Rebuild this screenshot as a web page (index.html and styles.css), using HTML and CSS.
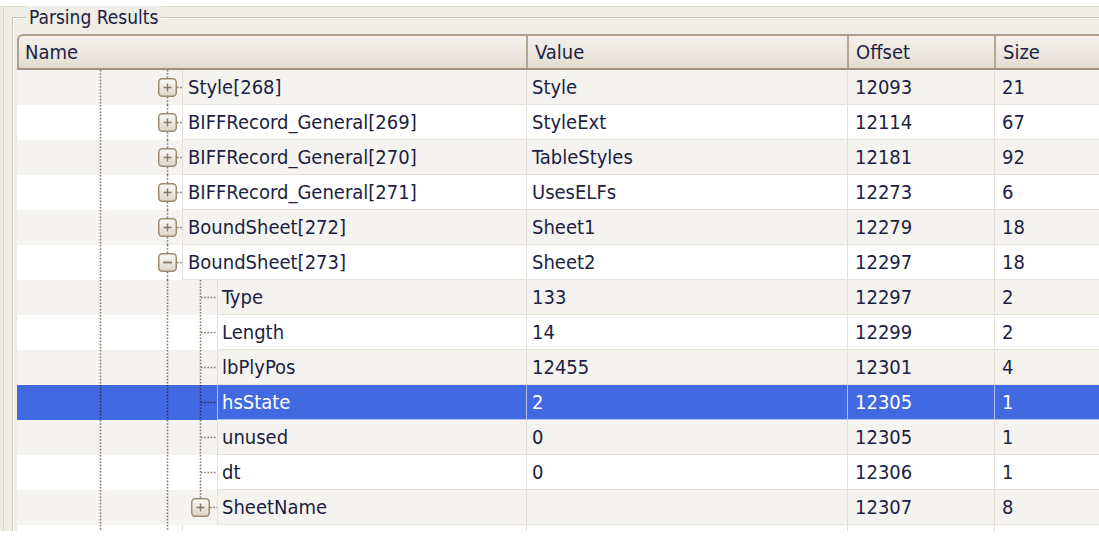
FILE: index.html
```html
<!DOCTYPE html>
<html>
<head>
<meta charset="utf-8">
<link rel="stylesheet" href="styles.css">
</head>
<body>
<svg class="defs" width="0" height="0" aria-hidden="true">
  <defs>
    <linearGradient id="bx" x1="0" y1="0" x2="0" y2="1">
      <stop offset="0" stop-color="#fbfaf7"/>
      <stop offset="1" stop-color="#ded6c7"/>
    </linearGradient>
    <g id="plusbox">
      <rect x="0.75" y="0.75" width="17.5" height="17.5" rx="3.5" fill="url(#bx)" stroke="#9d8c74" stroke-width="1.5" stroke-dasharray="none"/>
      <path d="M5.5 9.5h8M9.5 5.5v8" stroke="#85765f" stroke-width="1.4" stroke-dasharray="none" fill="none"/>
    </g>
    <g id="minusbox">
      <rect x="0.75" y="0.75" width="17.5" height="17.5" rx="3.5" fill="url(#bx)" stroke="#9d8c74" stroke-width="1.5" stroke-dasharray="none"/>
      <path d="M5 9.5h9" stroke="#85765f" stroke-width="1.8" stroke-dasharray="none" fill="none"/>
    </g>
    <g id="r1p" class="dots">
      <path d="M83.5 0v35M150.5 0v8M150.5 27v8M160 17.5h5"/>
      <use href="#plusbox" x="141" y="8"/>
    </g>
    <g id="r1m" class="dots">
      <path d="M83.5 0v35M150.5 0v8M150.5 27v8M160 17.5h5"/>
      <use href="#minusbox" x="141" y="8"/>
    </g>
    <g id="r2" class="dots">
      <path d="M83.5 0v35M150.5 0v35M183.5 0v35M184 17.5h16"/>
    </g>
    <g id="r2last" class="dots">
      <path d="M83.5 0v35M150.5 0v35M183.5 0v8M193 17.5h7"/>
      <use href="#plusbox" x="174" y="8"/>
    </g>
    <g id="r0" class="dots">
      <path d="M83.5 0v35M150.5 0v35"/>
    </g>
  </defs>
</svg>

<div class="window">
  <div class="inner">
    <div class="group">
      <div class="legend">Parsing Results</div>
      <div class="list">
        <div class="hdr">
          <div class="hc hc-name">Name</div>
          <div class="hc hc-col">Value</div>
          <div class="hc hc-col">Offset</div>
          <div class="hc hc-col">Size</div>
        </div>
        <div class="rows">
          <div class="row alt">
            <div class="name"><svg class="tree t1"><use href="#r1p"/></svg><div class="cell tx">Style[268]</div></div>
            <div class="cell val">Style</div><div class="cell off">12093</div><div class="cell size">21</div>
          </div>
          <div class="row">
            <div class="name"><svg class="tree t1"><use href="#r1p"/></svg><div class="cell tx">BIFFRecord_General[269]</div></div>
            <div class="cell val">StyleExt</div><div class="cell off">12114</div><div class="cell size">67</div>
          </div>
          <div class="row alt">
            <div class="name"><svg class="tree t1"><use href="#r1p"/></svg><div class="cell tx">BIFFRecord_General[270]</div></div>
            <div class="cell val">TableStyles</div><div class="cell off">12181</div><div class="cell size">92</div>
          </div>
          <div class="row">
            <div class="name"><svg class="tree t1"><use href="#r1p"/></svg><div class="cell tx">BIFFRecord_General[271]</div></div>
            <div class="cell val">UsesELFs</div><div class="cell off">12273</div><div class="cell size">6</div>
          </div>
          <div class="row alt">
            <div class="name"><svg class="tree t1"><use href="#r1p"/></svg><div class="cell tx">BoundSheet[272]</div></div>
            <div class="cell val">Sheet1</div><div class="cell off">12279</div><div class="cell size">18</div>
          </div>
          <div class="row">
            <div class="name"><svg class="tree t1"><use href="#r1m"/></svg><div class="cell tx">BoundSheet[273]</div></div>
            <div class="cell val">Sheet2</div><div class="cell off">12297</div><div class="cell size">18</div>
          </div>
          <div class="row alt">
            <div class="name"><svg class="tree t2"><use href="#r2"/></svg><div class="cell tx tx2">Type</div></div>
            <div class="cell val">133</div><div class="cell off">12297</div><div class="cell size">2</div>
          </div>
          <div class="row">
            <div class="name"><svg class="tree t2"><use href="#r2"/></svg><div class="cell tx tx2">Length</div></div>
            <div class="cell val">14</div><div class="cell off">12299</div><div class="cell size">2</div>
          </div>
          <div class="row alt">
            <div class="name"><svg class="tree t2"><use href="#r2"/></svg><div class="cell tx tx2">lbPlyPos</div></div>
            <div class="cell val">12455</div><div class="cell off">12301</div><div class="cell size">4</div>
          </div>
          <div class="row sel">
            <div class="name"><svg class="tree t2"><use href="#r2"/></svg><div class="cell tx tx2">hsState</div></div>
            <div class="cell val">2</div><div class="cell off">12305</div><div class="cell size">1</div>
          </div>
          <div class="row alt">
            <div class="name"><svg class="tree t2"><use href="#r2"/></svg><div class="cell tx tx2">unused</div></div>
            <div class="cell val">0</div><div class="cell off">12305</div><div class="cell size">1</div>
          </div>
          <div class="row">
            <div class="name"><svg class="tree t2"><use href="#r2"/></svg><div class="cell tx tx2">dt</div></div>
            <div class="cell val">0</div><div class="cell off">12306</div><div class="cell size">1</div>
          </div>
          <div class="row alt">
            <div class="name"><svg class="tree t2"><use href="#r2last"/></svg><div class="cell tx tx2">SheetName</div></div>
            <div class="cell val"></div><div class="cell off">12307</div><div class="cell size">8</div>
          </div>
          <div class="row">
            <div class="name"><svg class="tree t1"><use href="#r0"/></svg><div class="cell tx"></div></div>
            <div class="cell val"></div><div class="cell off"></div><div class="cell size"></div>
          </div>
        </div>
      </div>
    </div>
  </div>
</div>
</body>
</html>
```

FILE: styles.css
```css
html, body {
  margin: 0;
  padding: 0;
  background: #ffffff;
}

body {
  font-family: "DejaVu Sans Condensed", "DejaVu Sans", sans-serif;
  font-stretch: condensed;
  font-size: 20px;
  color: #201e42;
  width: 1099px;
  height: 539px;
  overflow: hidden;
}

.defs {
  position: absolute;
  width: 0;
  height: 0;
}

.window {
  margin-top: 6px;
  height: 525px;
  box-sizing: border-box;
  background: #efede7;
  border-top: 1px solid #e0dace;
  padding-left: 3px;
  display: flex;
}

.inner {
  flex: 1;
  border-left: 1px solid #d9d2c5;
  padding-left: 8px;
  padding-top: 10px;
  display: flex;
  min-width: 0;
}

.group {
  flex: 1;
  position: relative;
  border-top: 1px solid #cdc4b3;
  border-left: 1px solid #cdc4b3;
  box-shadow: inset 1px 1px 0 #ffffff;
  padding-left: 4px;
  padding-top: 16px;
  display: flex;
  flex-direction: column;
  min-width: 0;
}

.legend {
  position: absolute;
  left: 13px;
  top: -12px;
  padding: 0 3px;
  background: #efede7;
  line-height: 22px;
  font-size: 19px;
}

.list {
  flex: 1;
  display: flex;
  flex-direction: column;
  overflow: hidden;
  min-width: 0;
}

.hdr {
  height: 36px;
  box-sizing: border-box;
  display: grid;
  grid-template-columns: 507px 321px 147px 1fr;
  border-top: 2px solid #ada08c;
  border-bottom: 2px solid #9f917d;
  border-left: 2px solid #ada08c;
  border-top-left-radius: 6px;
  background: linear-gradient(#f3f1ec 0%, #ece8e0 55%, #e2dbce 100%);
}

.hc {
  display: flex;
  align-items: center;
  white-space: nowrap;
}

.hc-name {
  padding-left: 6px;
}

.hc-col {
  border-left: 2px solid #b3a793;
  padding-left: 7px;
}

.rows {
  flex: 1;
  overflow: hidden;
}

.row {
  height: 35px;
  display: grid;
  grid-template-columns: 509px 321px 147px 1fr;
  background: #ffffff;
}

.row.alt {
  background: #f4f3f0;
}

.row.sel {
  background: #4169e1;
  color: #ffffff;
}

.name {
  display: flex;
  min-width: 0;
}

.tree {
  flex: none;
  height: 35px;
  color: #87796a;
}

.tree.t1 {
  width: 165px;
}

.tree.t2 {
  width: 200px;
}

.sel .tree {
  color: #2c2f5c;
}

.dots {
  stroke: currentColor;
  stroke-width: 1.6;
  stroke-dasharray: 1.6 1.6;
  fill: none;
}

.cell {
  box-sizing: border-box;
  border-left: 1px solid #e5e0d7;
  border-bottom: 1px solid #e5e0d7;
  display: flex;
  align-items: center;
  white-space: nowrap;
  overflow: hidden;
  min-width: 0;
}

.sel .cell {
  border-color: #b3c0ec;
}

.tx {
  flex: 1;
  padding-left: 5px;
}

.tx2 {
  padding-left: 4px;
}

.val {
  padding-left: 5px;
}

.off {
  padding-left: 7px;
}

.size {
  padding-left: 7px;
}
```
